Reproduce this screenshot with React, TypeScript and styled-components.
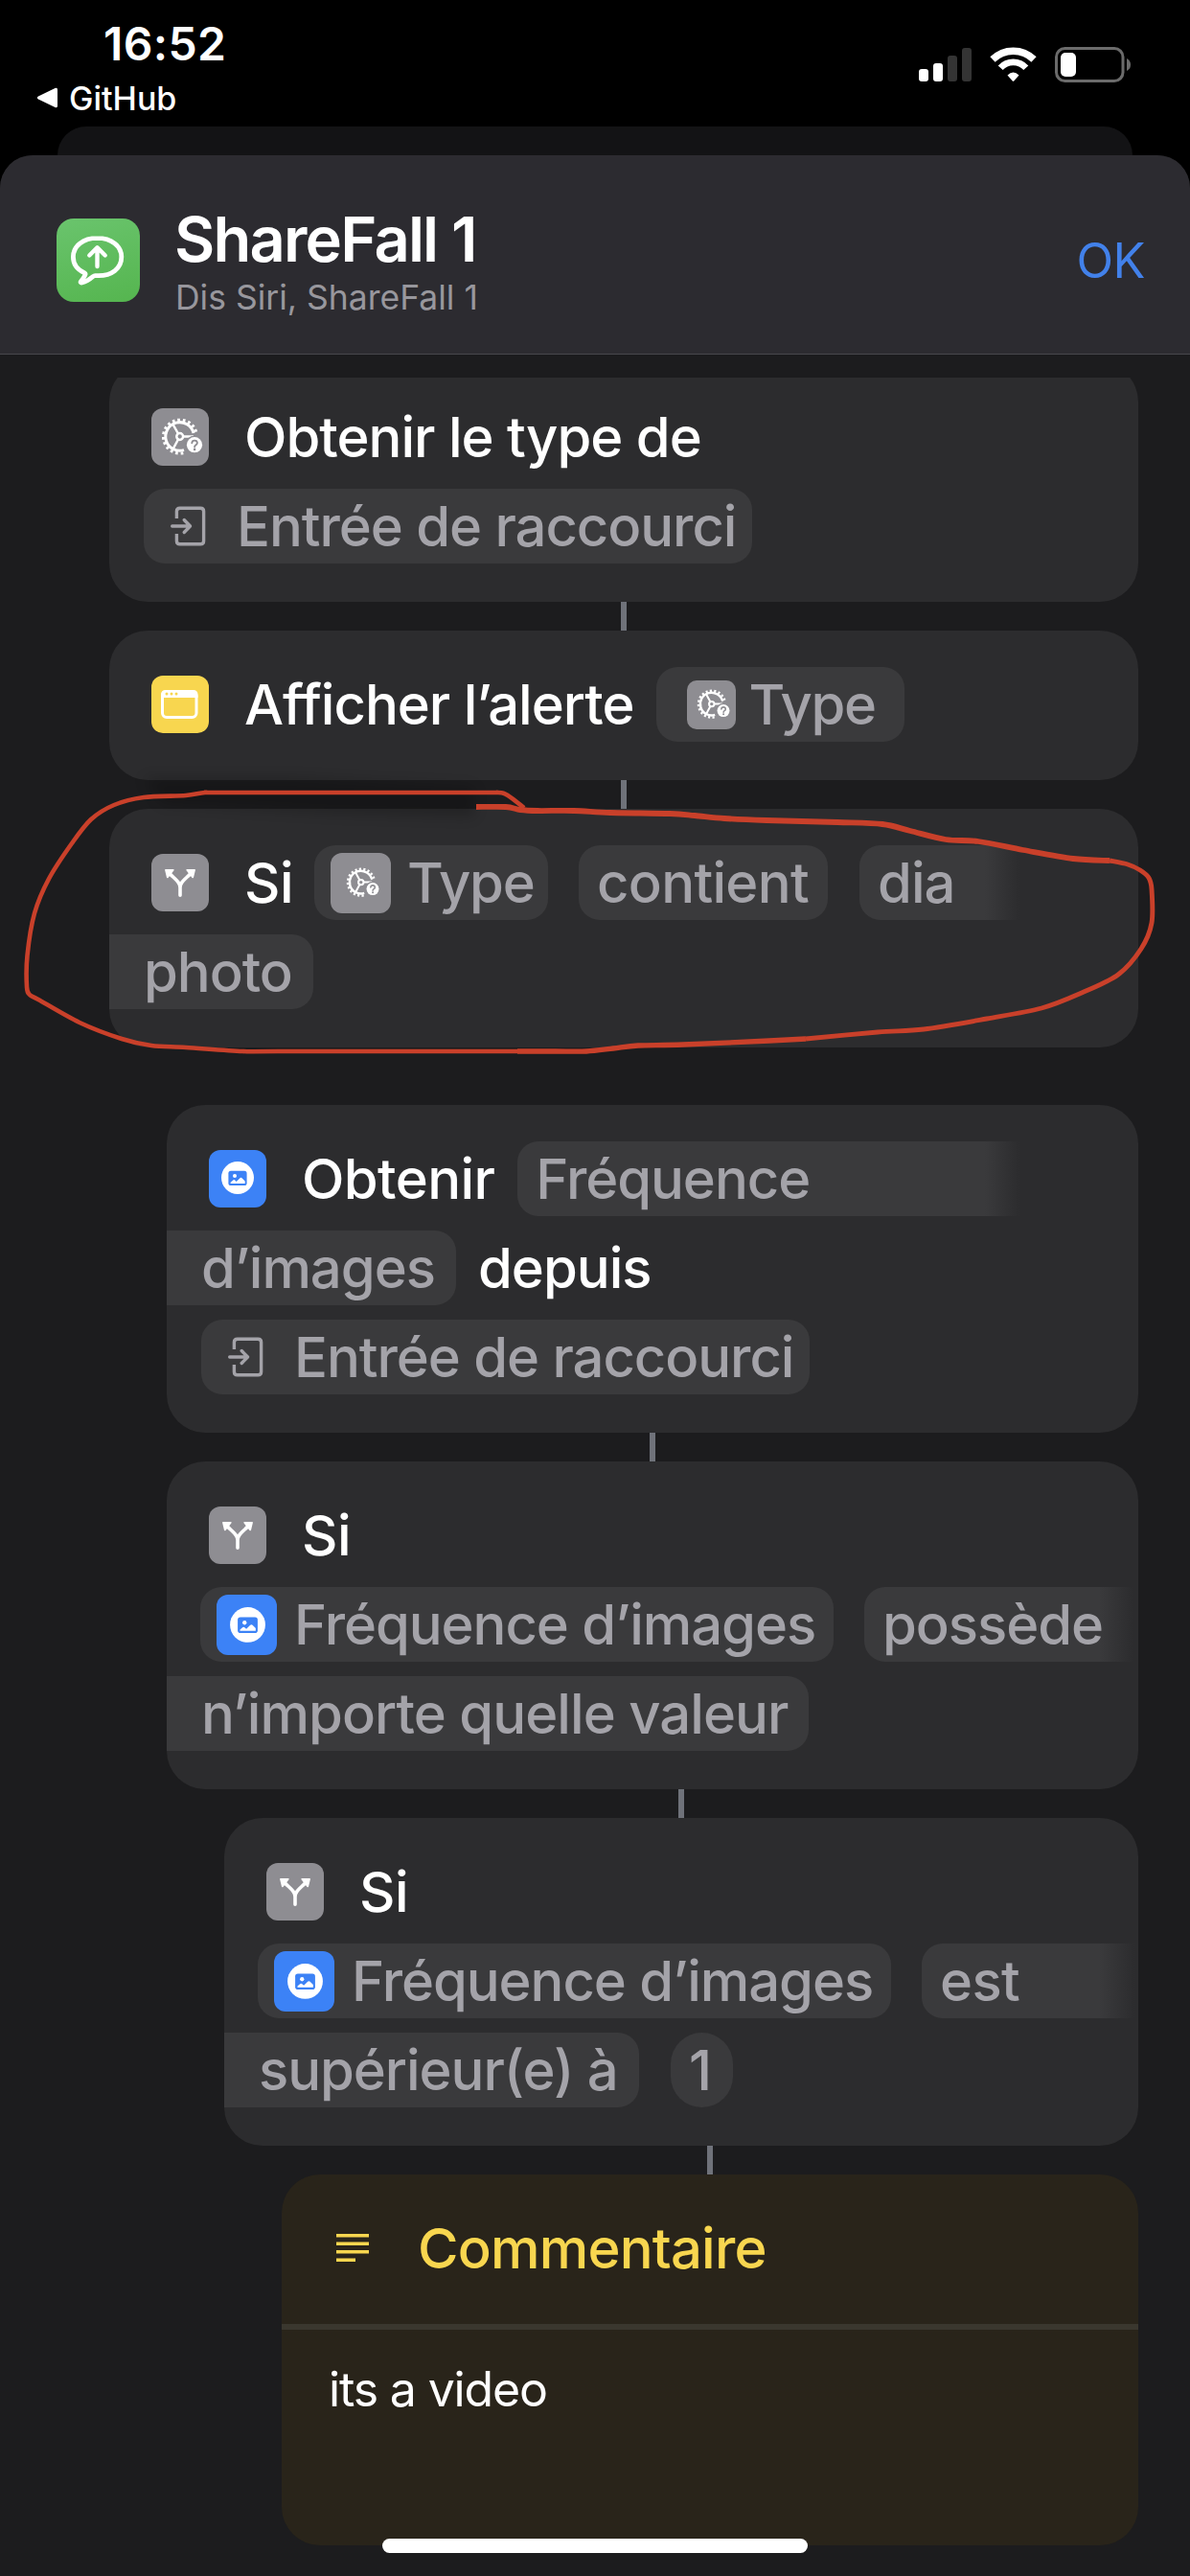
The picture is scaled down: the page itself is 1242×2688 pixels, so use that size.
import React from "react";
import styled, { createGlobalStyle } from "styled-components";

const Global = createGlobalStyle`
  * { box-sizing: border-box; }
  body { margin: 0; background: #000; font-family: Inter, "Liberation Sans", sans-serif; }
  svg { display: block; flex: none; }
`;

type Pt = [number, number];

/* Catmull-Rom smoothing of a freehand line */
const smooth = (pts: Pt[]) => {
  let d = `M${pts[0][0]} ${pts[0][1]}`;
  for (let i = 0; i < pts.length - 1; i++) {
    const p0 = pts[i - 1] || pts[i];
    const p1 = pts[i];
    const p2 = pts[i + 1];
    const p3 = pts[i + 2] || p2;
    const k = 6.5;
    d += `C${p1[0] + (p2[0] - p0[0]) / k} ${p1[1] + (p2[1] - p0[1]) / k} ${p2[0] - (p3[0] - p1[0]) / k} ${p2[1] - (p3[1] - p1[1]) / k} ${p2[0]} ${p2[1]}`;
  }
  return d;
};

const Screen = styled.div`
  position: relative;
  width: 1242px;
  height: 2688px;
  overflow: hidden;
  background: #000;
  display: flex;
  flex-direction: column;
`;

const StatusBar = styled.div`
  height: 132px;
  flex: none;
  display: flex;
  justify-content: space-between;
  padding: 0 62px 0 38px;
`;
const StatusLeft = styled.div`
  display: flex;
  flex-direction: column;
`;
const Clock = styled.div`
  margin: 16px 0 0 70px;
  height: 60px;
  line-height: 60px;
  font-size: 48px;
  font-weight: 600;
  letter-spacing: 0.4px;
  color: #fff;
`;
const BackLink = styled.div`
  display: flex;
  align-items: center;
  gap: 11px;
  height: 52px;
  font-size: 34px;
  font-weight: 500;
  color: #fff;
`;
const StatusIcons = styled.div`
  display: flex;
  align-items: flex-start;
  padding-top: 46px;
`;

const BackSheet = styled.div`
  height: 30px;
  flex: none;
  margin: 0 60px;
  background: #131315;
  border-radius: 30px 30px 0 0;
`;
const Sheet = styled.div`
  flex: 1;
  display: flex;
  flex-direction: column;
  background: #1c1c1e;
  border-radius: 34px 34px 0 0;
  overflow: hidden;
`;
const Header = styled.div`
  height: 208px;
  flex: none;
  display: flex;
  align-items: center;
  padding: 12px 47px 0 59px;
  background: #2c2b30;
  border-bottom: 1px solid #48474c;
`;
const AppIcon = styled.div`
  width: 87px;
  height: 87px;
  border-radius: 18px;
  background: linear-gradient(165deg, #6ac46d, #55b54f);
  display: grid;
  place-items: center;
`;
const Titles = styled.div`
  flex: 1;
  margin: 4px 0 0 36px;
`;
const Title = styled.div`
  font-size: 65px;
  line-height: 70px;
  font-weight: 600;
  letter-spacing: -1.8px;
  color: #fff;
`;
const Subtitle = styled.div`
  margin-top: 4px;
  padding-left: 1px;
  font-size: 35.5px;
  line-height: 44px;
  letter-spacing: 0;
  color: #98979d;
`;
const OkButton = styled.div`
  font-size: 50.5px;
  letter-spacing: -0.5px;
  color: #4281ea;
`;

const Scroll = styled.div`
  flex: 1;
  margin-top: 24px;
  overflow: hidden;
  display: flex;
  flex-direction: column;
`;
const Card = styled.div<{ $left: number; $cut?: number }>`
  flex: none;
  margin: ${(p) => -(p.$cut || 0)}px 54px 0 ${(p) => p.$left}px;
  padding: 30.5px 0 32.5px;
  background: #2c2c2e;
  border-radius: 40px;
  overflow: hidden;
`;
const Link = styled.div<{ $left: number; $hidden?: boolean; $h?: number }>`
  flex: none;
  height: ${(p) => p.$h || 30}px;
  margin: 0 54px 0 ${(p) => p.$left}px;
  display: flex;
  justify-content: center;
  &::after {
    content: "";
    width: 6px;
    background: ${(p) => (p.$hidden ? "transparent" : "#6f727a")};
  }
`;
const Line = styled.div<{ $start: number }>`
  height: 93px;
  display: flex;
  align-items: center;
  padding-left: ${(p) => p.$start}px;
  white-space: nowrap;
`;
const Word = styled.span<{ $gap: number; $ls?: number }>`
  margin-left: ${(p) => p.$gap}px;
  font-size: 58px;
  font-weight: 500;
  letter-spacing: ${(p) => p.$ls ?? -1}px;
  color: #fff;
`;
const Pill = styled.span<{ $w: number; $gap?: number; $pad: number; $kind?: "left" | "fade" | "round"; $ls?: number }>`
  flex: none;
  width: ${(p) => p.$w}px;
  height: 78px;
  margin-left: ${(p) => p.$gap || 0}px;
  padding-left: ${(p) => p.$pad}px;
  display: flex;
  align-items: center;
  font-size: 58px;
  font-weight: 500;
  letter-spacing: ${(p) => p.$ls ?? -1.05}px;
  color: #a4a3a9;
  background: ${(p) =>
    p.$kind === "fade"
      ? "linear-gradient(90deg, #3a3a3c calc(100% - 36px), #2c2c2e)"
      : "#3a3a3c"};
  border-radius: ${(p) =>
    p.$kind === "left" ? "0 22px 22px 0" : p.$kind === "fade" ? "22px 0 0 22px" : p.$kind === "round" ? "33px" : "22px"};
`;
const Tile = styled.span<{ $size: number; $bg: string; $mr?: number }>`
  flex: none;
  width: ${(p) => p.$size}px;
  height: ${(p) => p.$size}px;
  margin-right: ${(p) => p.$mr || 0}px;
  border-radius: ${(p) => (p.$size < 60 ? 10 : 12)}px;
  background: ${(p) => p.$bg};
  display: grid;
  place-items: center;
`;
const InputLabel = styled.span`
  margin-left: 31px;
`;

const Comment = styled.div`
  flex: none;
  height: 387px;
  margin: 0 54px 0 294px;
  background: #29241a;
  border-radius: 40px;
  overflow: hidden;
`;
const CommentHead = styled.div`
  height: 162px;
  display: flex;
  align-items: center;
  padding: 0 0 3px 57px;
  gap: 51px;
  border-bottom: 6px solid #3a372e;
  font-size: 58px;
  font-weight: 500;
  letter-spacing: -0.8px;
  color: #f8d64f;
`;
const CommentBody = styled.div`
  padding: 31px 0 0 49px;
  font-size: 50px;
  line-height: 62px;
  letter-spacing: -1.15px;
  color: #fff;
`;
const HomeBar = styled.div`
  position: absolute;
  left: 399px;
  top: 2649px;
  width: 444px;
  height: 15px;
  border-radius: 8px;
  background: #fff;
`;
const Ink = styled.svg`
  position: absolute;
  left: 0;
  top: 790px;
  pointer-events: none;
`;

const GRAY = "#8e8d92";
const BLUE = "#3c82f6";

const Gear = ({ size }: { size: number }) => (
  <svg width={size} height={size} viewBox="0 0 60 60" fill="none">
    <g stroke="#fff">
      <path d="M44 26A14.800 14.800 0 1 0 34 43.600" strokeWidth="3" />
      <path d="M46.600 24.600A17.400 17.400 0 1 0 34.600 46.400" strokeWidth="3.200" strokeDasharray="2.700 2.800" />
      <circle cx="29.700" cy="29.500" r="3.400" strokeWidth="2.500" />
      <path d="M28 26.500L22.600 17M28 32.500L22.600 42.500M33 29.500H44" strokeWidth="2.500" />
    </g>
    <circle cx="45" cy="38.200" r="9.700" fill={GRAY} />
    <circle cx="45" cy="38.200" r="8.100" fill="#fff" />
    <path d="M42.300 36.200q.2-2.600 2.800-2.600t2.800 2.500q0 1.400-1.500 2.200-1.300.7-1.300 2" stroke={GRAY} strokeWidth="1.900" strokeLinecap="round" />
    <circle cx="45.100" cy="42.900" r="1.300" fill={GRAY} />
  </svg>
);
const Fork = () => (
  <svg width="60" height="60" viewBox="0 0 60 60" fill="none" stroke="#fff" strokeWidth="3.600" strokeLinecap="round">
    <path d="M30 43.200V35C30 29 24 26 19 20.500M30 35C30 29 36 26 41 20.500" />
    <path d="M15 16.800h7.800l-6 7.600zM45 16.800h-7.800l6 7.600z" fill="#fff" strokeWidth="1.800" strokeLinejoin="round" />
  </svg>
);
const Photo = ({ size }: { size: number }) => (
  <svg width={size} height={size} viewBox="0 0 60 60">
    <circle cx="30" cy="29" r="17" fill="#fff" />
    <rect x="20.400" y="21.800" width="19.200" height="15.200" rx="2.600" fill={BLUE} />
    <circle cx="27" cy="27" r="2" fill="#fff" />
    <path d="M22.600 34.900v-1.200l2.700-2.300q.9-.6 1.800.1l1.600 1.400 3.800-3.600q1.100-.9 2.200.1l3 3v2.500z" fill="#fff" />
  </svg>
);
const Entry = () => (
  <svg width="38" height="44" viewBox="0 0 38 44" fill="none" stroke="#a4a3a9" strokeWidth="3.400" strokeLinecap="round" strokeLinejoin="round">
    <path d="M6.400 14V6.600q0-3.400 3.400-3.400h21.400q3.400 0 3.400 3.400v30.800q0 3.400-3.400 3.400H9.800q-3.400 0-3.400-3.400V30" strokeLinecap="butt" />
    <path d="M1.700 22H20M14.200 15.500L20.500 22l-6.300 6.500" />
  </svg>
);
const Window = () => (
  <svg width="60" height="60" viewBox="0 0 60 60">
    <rect x="11.500" y="16.500" width="35.500" height="27" rx="4.500" fill="none" stroke="#fff" strokeWidth="3" />
    <path d="M10 23v-3q0-5 5-5h28.500q5 0 5 5v3z" fill="#fff" />
    <g fill="#f8d64f">
      <circle cx="16" cy="19" r="1.500" />
      <circle cx="21" cy="19" r="1.500" />
      <circle cx="26" cy="19" r="1.500" />
    </g>
  </svg>
);
const Bubble = () => (
  <svg width="87" height="87" viewBox="0 0 87 87" fill="none" stroke="#fff" strokeWidth="4.800" strokeLinecap="round" strokeLinejoin="round">
    <path d="M42.500 20.400C27.500 20.400 17.400 29 17.400 40c0 7.200 4 13.200 11.600 16.600 1 .5 1.300 1.300.8 2.400-1.200 2.800-2.800 4.800-4.300 6.500-.8.900-.2 1.800 1 1.500 4.800-1.200 8.500-3.800 11.600-6.500.8-.7 1.500-1 2.500-.9 17.500 1.200 27.200-8 27.200-19.600 0-11-10.300-19.600-25.300-19.600z" />
    <path d="M42.500 50V31M34.300 38.500l8.200-8.200 8.200 8.200" strokeWidth="4.400" />
  </svg>
);

const topRight: Pt[] = [
  [497, 842], [528, 842], [543, 845], [561, 846], [599, 846], [637, 848], [699, 849], [725, 851], [756, 854], [800, 856], [874, 858],
  [921, 860], [950, 867], [987, 876], [1021, 878], [1068, 887], [1120, 896], [1158, 898],
];
const rightBottom: Pt[] = [
  [1158, 898], [1177, 902], [1190, 908], [1199, 916], [1202, 928],
  [1202, 963], [1191, 990], [1167, 1017], [1129, 1036], [1087, 1052], [1030, 1063], [964, 1074], [916, 1077], [841, 1084],
];
const bottom: Pt[] = [
  [841, 1084], [803, 1086], [713, 1090], [666, 1091], [640, 1094], [612, 1097], [580, 1097], [540, 1097],
];
const leftLoop: Pt[] = [
  [540, 1097], [290, 1097], [253, 1097], [194, 1093], [158, 1091], [127, 1084], [83, 1067],
  [40, 1043], [31, 1038], [28, 1030], [28.5, 997], [36, 953], [51, 917], [75, 880], [95, 855], [119, 840], [150, 832], [194, 830],
  [214, 827], [240, 827], [490, 827], [520, 827], [530, 830], [547, 843],
];

const Input = () => (
  <Pill $w={635} $pad={28}>
    <Entry />
    <InputLabel>Entrée de raccourci</InputLabel>
  </Pill>
);

export default function App() {
  return (
    <Screen>
      <Global />
      <StatusBar>
        <StatusLeft>
          <Clock>16:52</Clock>
          <BackLink>
            <svg width="23" height="22" viewBox="0 0 23 22">
              <path d="M2 9.500L19.500 1Q22 0 22 2.500V19.500Q22 22 19.500 21L2 12.500Q-.5 11 2 9.500z" fill="#fff" />
            </svg>
            GitHub
          </BackLink>
        </StatusLeft>
        <StatusIcons>
          <svg width="223" height="44" viewBox="955 46 223 44">
            <g fill="#fff">
              <rect x="957" y="72" width="10" height="13" rx="3" />
              <rect x="972" y="66" width="10" height="19" rx="3" />
            </g>
            <g fill="#343434">
              <rect x="987" y="58" width="10" height="27" rx="3" />
              <rect x="1002" y="50" width="10" height="35" rx="3" />
            </g>
            <g fill="none" stroke="#fff">
              <path d="M1034 62A30.500 30.500 0 0 1 1077 62" strokeWidth="7.500" />
              <path d="M1042.200 70.800A18 18 0 0 1 1068.800 70.800" strokeWidth="6.800" />
            </g>
            <path d="M1049.500 78.500q6-6 12 0l-5 5.700q-1 1-2 0z" fill="#fff" />
            <rect x="1100.500" y="50.500" width="69.500" height="34" rx="9" fill="none" stroke="#6b6b6b" strokeWidth="3" />
            <rect x="1105" y="55" width="16" height="25" rx="5" fill="#fff" />
            <path d="M1174 61q4 2 4 6.500t-4 6.500z" fill="#6b6b6b" />
          </svg>
        </StatusIcons>
      </StatusBar>
      <BackSheet />
      <Sheet>
        <Header>
          <AppIcon>
            <Bubble />
          </AppIcon>
          <Titles>
            <Title>ShareFall 1</Title>
            <Subtitle>Dis Siri, ShareFall 1</Subtitle>
          </Titles>
          <OkButton>OK</OkButton>
        </Header>
        <Scroll>
          <Card $left={114} $cut={15}>
            <Line $start={44}>
              <Tile $size={60} $bg={GRAY}><Gear size={60} /></Tile>
              <Word $gap={37}>Obtenir le type de</Word>
            </Line>
            <Line $start={36}>
              <Input />
            </Line>
          </Card>
          <Link $left={114} />
          <Card $left={114}>
            <Line $start={44}>
              <Tile $size={60} $bg="#f8d64f"><Window /></Tile>
              <Word $gap={37}>Afficher l’alerte</Word>
              <Pill $w={259} $gap={24} $pad={32} $ls={-1.3}>
                <Tile $size={51} $bg={GRAY} $mr={13}><Gear size={48} /></Tile>
                Type
              </Pill>
            </Line>
          </Card>
          <Link $left={114} />
          <Card $left={114}>
            <Line $start={44}>
              <Tile $size={60} $bg={GRAY}><Fork /></Tile>
              <Word $gap={37} $ls={-0.5}>Si</Word>
              <Pill $w={244} $gap={22} $pad={17} $ls={-1.3}>
                <Tile $size={63} $bg={GRAY} $mr={17}><Gear size={48} /></Tile>
                Type
              </Pill>
              <Pill $w={260} $gap={32} $pad={19} $ls={-0.7}>contient</Pill>
              <Pill $w={167} $gap={33} $pad={19} $kind="fade">dia</Pill>
            </Line>
            <Line $start={0}>
              <Pill $w={213} $pad={36} $kind="left">photo</Pill>
            </Line>
          </Card>
          <Link $left={114} $hidden $h={60} />
          <Card $left={174}>
            <Line $start={44}>
              <Tile $size={60} $bg={BLUE}><Photo size={60} /></Tile>
              <Word $gap={37} $ls={-0.6}>Obtenir</Word>
              <Pill $w={524} $gap={24} $pad={19} $kind="fade">Fréquence</Pill>
            </Line>
            <Line $start={0}>
              <Pill $w={302} $pad={36} $kind="left">d’images</Pill>
              <Word $gap={23}>depuis</Word>
            </Line>
            <Line $start={36}>
              <Input />
            </Line>
          </Card>
          <Link $left={174} />
          <Card $left={174}>
            <Line $start={44}>
              <Tile $size={60} $bg={GRAY}><Fork /></Tile>
              <Word $gap={37} $ls={-0.5}>Si</Word>
            </Line>
            <Line $start={35}>
              <Pill $w={661} $pad={17}>
                <Tile $size={63} $bg={BLUE} $mr={18}><Photo size={65} /></Tile>
                Fréquence d’images
              </Pill>
              <Pill $w={281} $gap={32} $pad={19} $kind="fade">possède</Pill>
            </Line>
            <Line $start={0}>
              <Pill $w={670} $pad={36} $kind="left" $ls={-0.95}>n’importe quelle valeur</Pill>
            </Line>
          </Card>
          <Link $left={234} />
          <Card $left={234}>
            <Line $start={44}>
              <Tile $size={60} $bg={GRAY}><Fork /></Tile>
              <Word $gap={37} $ls={-0.5}>Si</Word>
            </Line>
            <Line $start={35}>
              <Pill $w={661} $pad={17}>
                <Tile $size={63} $bg={BLUE} $mr={18}><Photo size={65} /></Tile>
                Fréquence d’images
              </Pill>
              <Pill $w={222} $gap={32} $pad={19} $kind="fade" $ls={-0.6}>est</Pill>
            </Line>
            <Line $start={0}>
              <Pill $w={433} $pad={36} $kind="left">supérieur(e) à</Pill>
              <Pill $w={65} $gap={33} $pad={19} $kind="round">1</Pill>
            </Line>
          </Card>
          <Link $left={294} />
          <Comment>
            <CommentHead>
              <svg width="34" height="30" viewBox="0 0 34 30" stroke="#f8d64f" strokeWidth="3.400">
                <path d="M0 1.800H34M0 10.300H34M0 18.800H34M0 27.300H20" />
              </svg>
              Commentaire
            </CommentHead>
            <CommentBody>its a video</CommentBody>
          </Comment>
        </Scroll>
      </Sheet>
      <Ink width="1242" height="330" viewBox="0 790 1242 330" fill="none">
        <defs>
          <filter id="soft" x="-10%" y="-60%" width="120%" height="220%">
            <feGaussianBlur stdDeviation="7" />
          </filter>
        </defs>
        <path d="M150 812L300 812 495 822V852L350 848 170 838z" fill="#000" opacity="0.2" filter="url(#soft)" />
        <g stroke="#c9402a" strokeLinejoin="round">
          <path d={smooth(topRight)} strokeWidth="5.800" />
          <path d={smooth(rightBottom)} strokeWidth="4.900" />
          <path d={smooth(bottom)} strokeWidth="5.300" />
          <path d={smooth(leftLoop)} strokeWidth="4.600" />
        </g>
      </Ink>
      <HomeBar />
    </Screen>
  );
}
